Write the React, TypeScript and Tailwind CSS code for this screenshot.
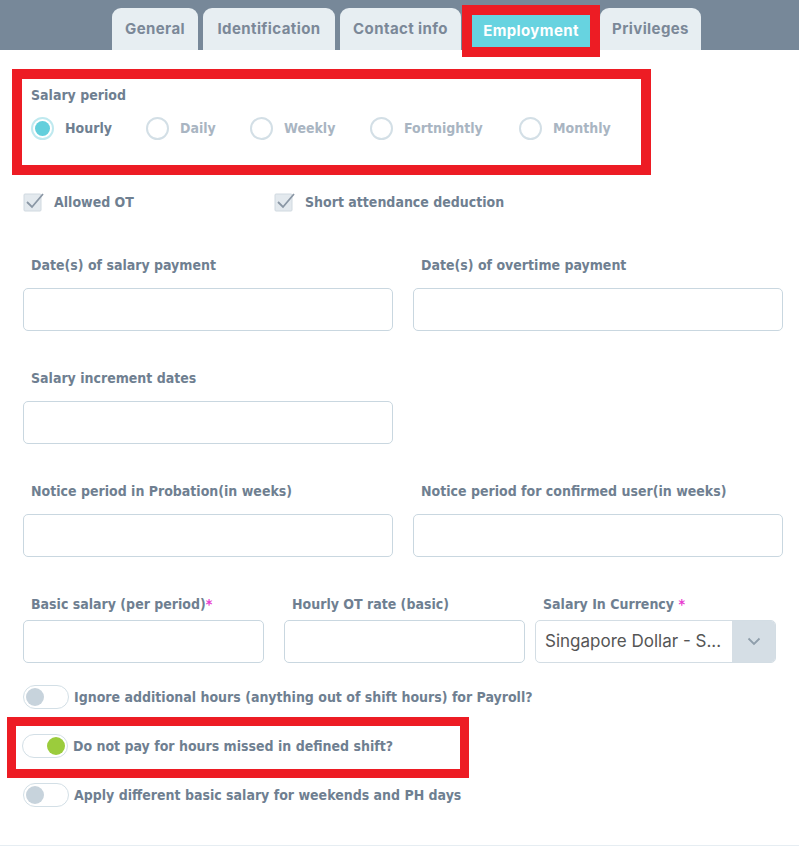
import React from "react";

const labelFont = { fontFamily: '"DejaVu Sans Condensed", "DejaVu Sans", sans-serif' };
const tabFont = { fontFamily: 'Inter, "Open Sans", sans-serif' };

function Tab({ label, w }: { label: string; w: string }) {
  return (
    <div
      className={
        "flex h-[42px] items-center justify-center rounded-t-[9px] bg-[#e7eef2] text-[15px] font-bold tracking-[0.4px] text-[#7b8898] " +
        w
      }
      style={tabFont}
    >
      {label}
    </div>
  );
}

function Radio({ label, checked }: { label: string; checked?: boolean }) {
  return (
    <div className="flex items-center gap-[11px]">
      <span
        className={
          "flex h-[23px] w-[23px] items-center justify-center rounded-full border-2 " +
          (checked ? "border-[#bfe9ef]" : "border-[#d3dfe6]")
        }
      >
        {checked && <span className="h-[15px] w-[15px] rounded-full bg-[#63cfdc]" />}
      </span>
      <span className={"text-[14px] font-bold " + (checked ? "text-[#6f7f91]" : "text-[#a9b5c2]")}>
        {label}
      </span>
    </div>
  );
}

function Check({ label }: { label: string }) {
  return (
    <div className="flex items-center gap-[9px]">
      <svg width="22" height="22" viewBox="0 0 22 22">
        <rect x="1" y="3" width="17" height="17" rx="1" fill="#e3e9ee" stroke="#d0d9e0" />
        <path d="M4 11 L9 16 L20 3" fill="none" stroke="#8a97a5" strokeWidth="1.8" />
      </svg>
      <span className="text-[14px] font-bold text-[#6f7f91]">{label}</span>
    </div>
  );
}

function Field({ label, w }: { label: string; w: string }) {
  return (
    <div className={"flex flex-col " + w}>
      <div className="h-[20px] pl-[8px] text-[14px] font-bold leading-[20px] text-[#6f7f91]">{label}</div>
      <div className="mt-[13px] h-[43px] rounded-[5px] border border-[#c9d7e0] bg-white" />
    </div>
  );
}

function Toggle({ label, on }: { label: string; on?: boolean }) {
  return (
    <div className="flex items-center gap-[5px]">
      <span
        className={
          "flex h-[24px] w-[46px] items-center rounded-full border border-[#d3dfe6] bg-white px-[2px] " +
          (on ? "justify-end" : "justify-start")
        }
      >
        <span className={"h-[18px] w-[18px] rounded-full " + (on ? "bg-[#9bcc3c]" : "bg-[#c7d3dc]")} />
      </span>
      <span className="text-[14px] font-bold text-[#6f7f91]">{label}</span>
    </div>
  );
}

export default function App() {
  return (
    <div className="h-[863px] w-[799px] bg-white" style={labelFont}>
      <div className="flex h-[50px] items-start bg-[#778899] pl-[112px] pt-[8px]">
        <Tab label="General" w="w-[86px]" />
        <div className="ml-[5px]">
          <Tab label="Identification" w="w-[132px]" />
        </div>
        <div className="ml-[5px]">
          <Tab label="Contact info" w="w-[121px]" />
        </div>
        <div className="ml-[1px] -mt-[3px] h-[52px] w-[138px] border-[10px] border-[#ed1c24]">
          <div
            className="flex h-full items-center justify-center bg-[#67d3e0] text-[15px] font-bold tracking-[0.4px] text-white"
            style={tabFont}
          >
            Employment
          </div>
        </div>
        <Tab label="Privileges" w="w-[101px]" />
      </div>

      <div className="ml-[12px] mt-[19px] h-[106px] w-[639px] border-[10px] border-[#ed1c24] pl-[9px] pt-[6px]">
        <div className="text-[14px] font-bold text-[#6f7f91]">Salary period</div>
        <div className="mt-[11px] flex items-center">
          <div className="w-[115px]">
            <Radio label="Hourly" checked />
          </div>
          <div className="w-[104px]">
            <Radio label="Daily" />
          </div>
          <div className="w-[120px]">
            <Radio label="Weekly" />
          </div>
          <div className="w-[149px]">
            <Radio label="Fortnightly" />
          </div>
          <Radio label="Monthly" />
        </div>
      </div>

      <div className="ml-[23px] mt-[16px] flex">
        <div className="w-[251px]">
          <Check label="Allowed OT" />
        </div>
        <Check label="Short attendance deduction" />
      </div>

      <div className="ml-[23px] mt-[42px] flex gap-[20px]">
        <Field w="w-[370px]" label="Date(s) of salary payment" />
        <Field w="w-[370px]" label="Date(s) of overtime payment" />
      </div>

      <div className="ml-[23px] mt-[37px] flex gap-[20px]">
        <Field w="w-[370px]" label="Salary increment dates" />
      </div>

      <div className="ml-[23px] mt-[37px] flex gap-[20px]">
        <Field w="w-[370px]" label="Notice period in Probation(in weeks)" />
        <Field w="w-[370px]" label="Notice period for confirmed user(in weeks)" />
      </div>

      <div className="ml-[23px] mt-[37px] flex">
        <div className="flex w-[241px] flex-col">
          <div className="h-[20px] pl-[8px] text-[14px] font-bold leading-[20px] text-[#6f7f91]">
            Basic salary (per period)<span className="text-[#e83ad0]">*</span>
          </div>
          <div className="mt-[6px] h-[43px] rounded-[5px] border border-[#c9d7e0]" />
        </div>
        <div className="ml-[20px] flex w-[241px] flex-col">
          <div className="h-[20px] pl-[8px] text-[14px] font-bold leading-[20px] text-[#6f7f91]">
            Hourly OT rate (basic)
          </div>
          <div className="mt-[6px] h-[43px] rounded-[5px] border border-[#c9d7e0]" />
        </div>
        <div className="ml-[10px] flex w-[241px] flex-col">
          <div className="h-[20px] pl-[8px] text-[14px] font-bold leading-[20px] text-[#6f7f91]">
            Salary In Currency <span className="text-[#e83ad0]">*</span>
          </div>
          <div className="mt-[6px] flex h-[43px] overflow-hidden rounded-[5px] border border-[#d3dde4]">
            <div
              className="flex flex-1 items-center pl-[9px] text-[17px] text-[#555]"
              style={{ fontFamily: 'Inter, "Open Sans", sans-serif' }}
            >
              Singapore Dollar - S...
            </div>
            <div className="flex w-[43px] items-center justify-center bg-[#d5dee5]">
              <svg width="14" height="9" viewBox="0 0 14 9">
                <path d="M1.5 1.5 L7 7 L12.5 1.5" fill="none" stroke="#8f9eab" strokeWidth="1.8" />
              </svg>
            </div>
          </div>
        </div>
      </div>

      <div className="ml-[23px] mt-[22px]">
        <Toggle label="Ignore additional hours (anything out of shift hours) for Payroll?" />
      </div>

      <div className="ml-[7px] mt-[8px] h-[61px] w-[462px] border-[9px] border-[#ed1c24] pl-[6px] pt-[8px]">
        <Toggle label="Do not pay for hours missed in defined shift?" on />
      </div>

      <div className="ml-[23px] mt-[5px]">
        <Toggle label="Apply different basic salary for weekends and PH days" />
      </div>

      <div className="mt-[38px] border-t border-[#e6edf2]" />
    </div>
  );
}
